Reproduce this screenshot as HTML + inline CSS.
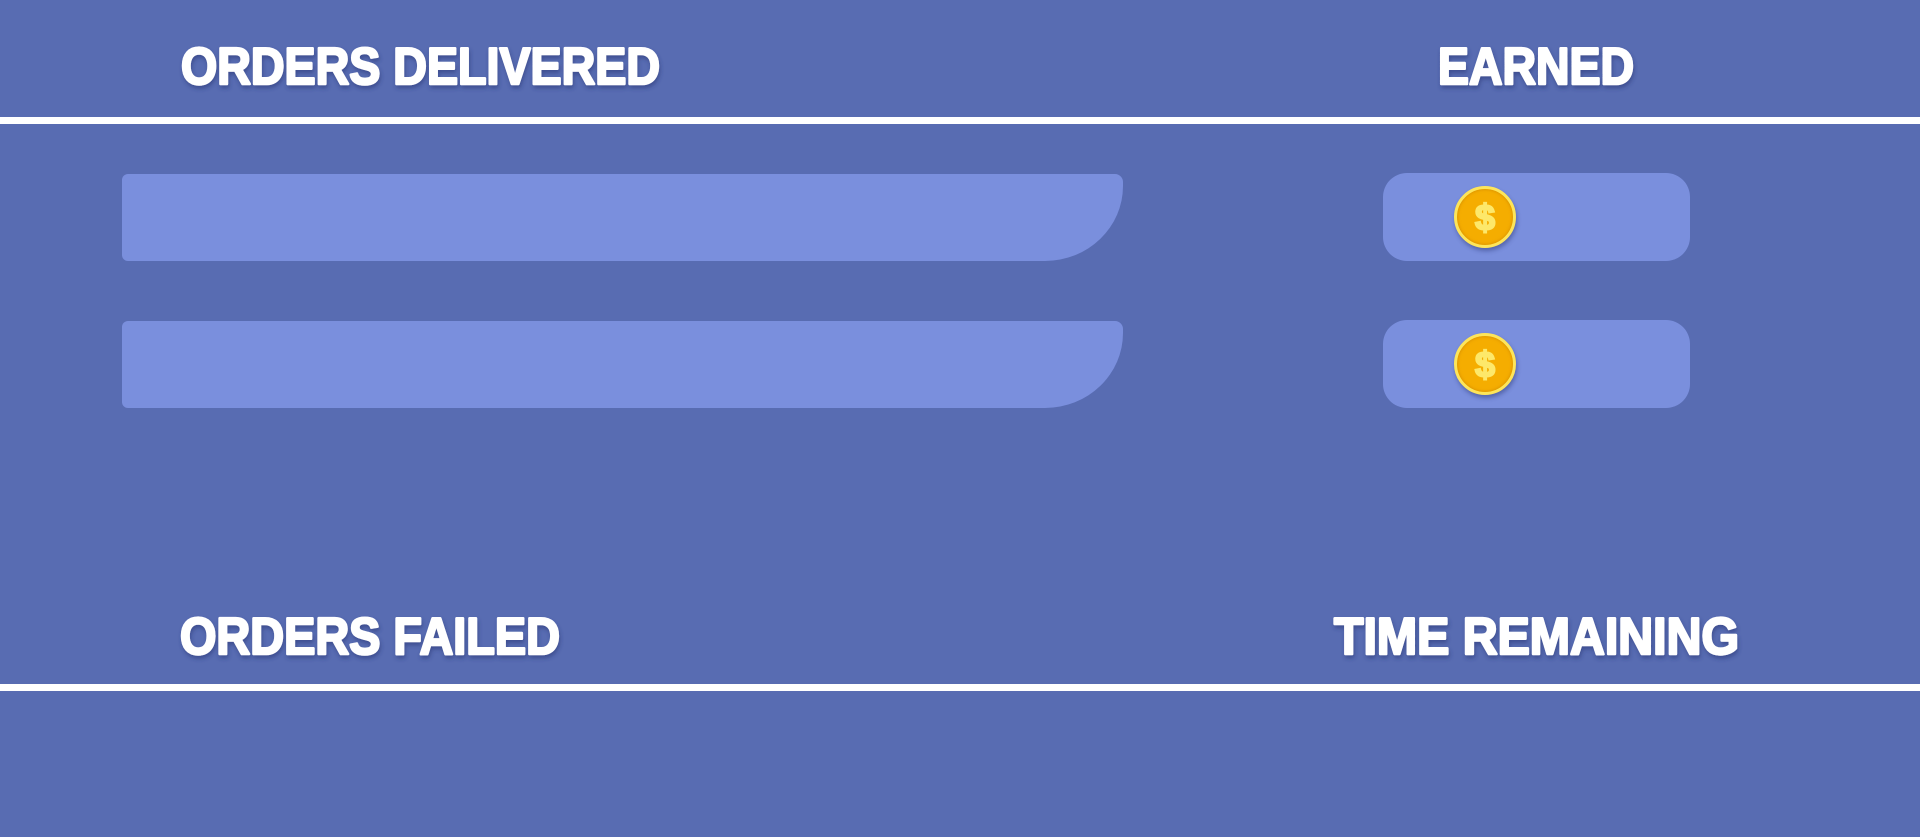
<!DOCTYPE html>
<html><head><meta charset="utf-8"><style>
html,body{margin:0;padding:0;width:1920px;height:837px;overflow:hidden;background:#586cb2;}
.line{position:absolute;left:0;width:1920px;height:7px;background:#fff;}
.bar{position:absolute;left:122px;width:1001px;height:87px;background:#7a8fdd;border-radius:6px 8px 78px 6px / 6px 8px 75px 6px;}
.box{position:absolute;left:1383px;width:307px;height:88px;background:#7a8fdd;border-radius:24px;}
.coin{position:absolute;left:1454px;width:56px;height:56px;border-radius:50%;background:#f5ad00;border:3px solid #fde55a;box-shadow:1px 3px 4px rgba(40,50,110,.45), inset 0 0 3px rgba(180,110,0,.6);}
.coin span{position:absolute;left:0;right:0;top:8px;text-align:center;font:900 36px "Liberation Sans",sans-serif;color:#fde86a;-webkit-text-stroke:2px #fde86a;}
svg{position:absolute;left:0;top:0;}
</style></head><body>
<div class="line" style="top:117px"></div>
<div class="line" style="top:684px"></div>
<div class="bar" style="top:174px"></div>
<div class="bar" style="top:321px"></div>
<div class="box" style="top:173px"></div>
<div class="box" style="top:320px"></div>
<div class="coin" style="top:186px"><span>$</span></div>
<div class="coin" style="top:333px"><span>$</span></div>
<svg width="1920" height="837">
<defs><filter id="s" x="-5%" y="-20%" width="110%" height="150%"><feDropShadow dx="1" dy="3" stdDeviation="2" flood-color="#2a3775" flood-opacity="0.55"/></filter></defs>
<g fill="#fff" stroke="#fff" stroke-width="2.5" stroke-linejoin="round" font-family="Liberation Sans, sans-serif" font-weight="bold" font-size="52" filter="url(#s)">
<text x="181" y="84" textLength="479" lengthAdjust="spacingAndGlyphs">ORDERS DELIVERED</text>
<text x="1438" y="84" textLength="196" lengthAdjust="spacingAndGlyphs">EARNED</text>
<text x="180" y="654" textLength="380" lengthAdjust="spacingAndGlyphs">ORDERS FAILED</text>
<text x="1334" y="654" textLength="405" lengthAdjust="spacingAndGlyphs">TIME REMAINING</text>
</g>
</svg>
</body></html>
